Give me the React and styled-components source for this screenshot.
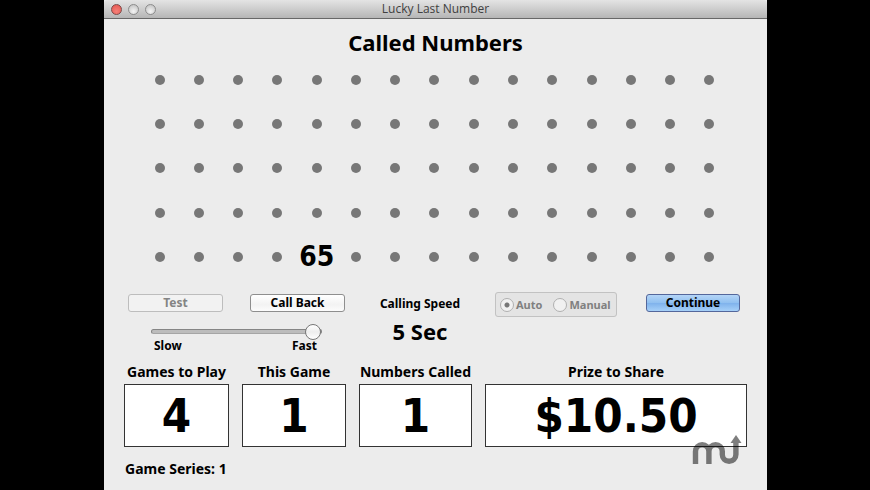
import { useState } from "react";
import styled, { createGlobalStyle } from "styled-components";

const GlobalStyle = createGlobalStyle`
  * {
    box-sizing: border-box;
  }

  body {
    margin: 0;
    background: #000;
    color: #000;
    font-family: "Noto Sans", "Open Sans", sans-serif;
  }
`;

const Desktop = styled.div`
  min-height: 100vh;
  display: flex;
  padding: 0 103px 0 104px;
`;

const Window = styled.div`
  position: relative;
  flex: 1;
  min-width: 0;
  background: #ececec;
`;

const TitleBar = styled.header`
  display: grid;
  grid-template-columns: 1fr auto 1fr;
  align-items: center;
  height: 19px;
  padding: 0 7px;
  background: linear-gradient(#e4e4e4, #b6b6b6);
  border-bottom: 1px solid #686868;
  border-top-left-radius: 4px;
  border-top-right-radius: 4px;
`;

const Lights = styled.div`
  display: flex;
  gap: 6px;
`;

const Light = styled.button`
  width: 11px;
  height: 11px;
  padding: 0;
  border: 1px solid ${({ $close }) => ($close ? "#7c4a48" : "#8c8c8c")};
  border-radius: 50%;
  background: ${({ $close }) =>
    $close
      ? "radial-gradient(circle at 50% 70%, #f58078, #e5544e)"
      : "radial-gradient(circle at 50% 70%, #f4f4f4, #bcbcbc)"};
`;

const Title = styled.div`
  font-family: "Open Sans", sans-serif;
  font-size: 12px;
  line-height: 18px;
  color: #404040;
`;

const Heading = styled.h1`
  margin: 0;
  padding: 9px 0 2px;
  font-size: 22px;
  line-height: 28px;
  font-weight: 700;
  text-align: center;
`;

const Board = styled.div`
  display: grid;
  grid-template-columns: repeat(15, minmax(0, 1fr));
  grid-template-rows: repeat(5, 1fr);
  place-items: center;
  height: 221px;
  padding: 0 38px 0 36px;
`;

const Dot = styled.span`
  width: 10px;
  height: 10px;
  border-radius: 50%;
  background: #777;
`;

const Called = styled.span`
  font-family: "DejaVu Sans Condensed", "DejaVu Sans", sans-serif;
  font-size: 28px;
  line-height: 28px;
  font-weight: 700;
`;

const Controls = styled.div`
  display: grid;
  grid-template-columns: 217px 1fr 122px 94px;
  column-gap: 29px;
  align-items: start;
  padding: 13px 27px 0 24px;
`;

const ButtonRow = styled.div`
  display: flex;
  justify-content: space-between;
  padding-top: 2px;
`;

const Button = styled.button`
  width: 95px;
  height: 18px;
  padding: 0;
  border: 1px solid ${({ $primary }) => ($primary ? "#54679b" : "#8e8e8e")};
  border-radius: 3px;
  background: ${({ $primary }) =>
    $primary
      ? "linear-gradient(#b4d5f7, #8fbff0 50%, #7fb2ec 51%, #a6d0f8)"
      : "linear-gradient(#fff, #f3f3f3 60%, #fcfcfc)"};
  color: #000;
  font-family: inherit;
  font-size: 12px;
  line-height: 16px;
  font-weight: 700;

  &:disabled {
    border-color: #bdbdbd;
    background: #f2f2f2;
    color: #848484;
  }
`;

const Slider = styled.input`
  appearance: none;
  display: block;
  width: 171px;
  height: 16px;
  margin: 11px 0 0 23px;
  background: transparent;

  &::-webkit-slider-runnable-track {
    height: 5px;
    border: 1px solid #858585;
    border-bottom-color: #a5a5a5;
    border-radius: 3px;
    background: #bcbcbc;
  }

  &::-webkit-slider-thumb {
    appearance: none;
    width: 16px;
    height: 16px;
    margin-top: -6px;
    border: 1px solid #777;
    border-radius: 50%;
    background: linear-gradient(#fff, #eee 50%, #fff);
  }
`;

const SliderLabels = styled.div`
  display: flex;
  justify-content: space-between;
  width: 163px;
  margin-left: 26px;
  font-size: 12px;
  line-height: 14px;
  font-weight: 700;
`;

const Speed = styled.div`
  text-align: center;
  font-weight: 700;
  white-space: nowrap;
`;

const SpeedLabel = styled.div`
  padding-top: 4px;
  font-size: 12px;
  line-height: 16px;
`;

const SpeedValue = styled.output`
  display: block;
  padding-top: 5px;
  font-size: 22px;
  line-height: 28px;
`;

const Modes = styled.fieldset`
  display: flex;
  align-items: center;
  gap: 11px;
  height: 25px;
  margin: 0;
  padding: 0 4px;
  border: 1px solid #c2c2c2;
  border-radius: 3px;
  background: #e4e4e4;
`;

const Mode = styled.label`
  display: flex;
  align-items: center;
  gap: 2px;
  font-size: 11px;
  line-height: 16px;
  font-weight: 700;
  color: #808080;
`;

const Radio = styled.input`
  appearance: none;
  width: 14px;
  height: 14px;
  margin: 0;
  border: 1px solid #b0b0b0;
  border-radius: 50%;
  background: #f1f1f1;

  &:checked {
    background: radial-gradient(circle, #777 2px, #f1f1f1 3px);
  }
`;

const Stats = styled.div`
  display: grid;
  grid-template-columns: 105px 104px 113px 1fr;
  column-gap: 13px;
  padding: 9px 20px 0;
`;

const StatLabel = styled.div`
  height: 22px;
  font-size: 14px;
  line-height: 20px;
  font-weight: 700;
  text-align: center;
  white-space: nowrap;
`;

const StatBox = styled.div`
  height: 63px;
  border: 1px solid #333;
  background: #fff;
  font-family: "DejaVu Sans Condensed", "DejaVu Sans", sans-serif;
  font-size: 47px;
  line-height: 61px;
  font-weight: 700;
  text-align: center;
`;

const Series = styled.div`
  padding: 12px 21px 0;
  font-size: 14px;
  line-height: 20px;
  font-weight: 700;
`;

const Watermark = styled.svg`
  position: absolute;
  right: 25px;
  bottom: 25px;
  width: 50px;
  height: 31px;
  opacity: 0.5;
`;

const COLUMNS = 15;
const ROWS = 5;
const CALLED = [65];

const stats = [
  { label: "Games to Play", value: "4" },
  { label: "This Game", value: "1" },
  { label: "Numbers Called", value: "1" },
  { label: "Prize to Share", value: "$10.50" },
];

const App = () => {
  const [speed, setSpeed] = useState(10);
  const numbers = Array.from({ length: COLUMNS * ROWS }, (_, i) => i + 1);

  return (
    <>
      <GlobalStyle />
      <Desktop>
        <Window>
          <TitleBar>
            <Lights>
              <Light $close aria-label="Close" />
              <Light aria-label="Minimize" />
              <Light aria-label="Zoom" />
            </Lights>
            <Title>Lucky Last Number</Title>
          </TitleBar>

          <Heading>Called Numbers</Heading>
          <Board>
            {numbers.map((n) =>
              CALLED.includes(n) ? <Called key={n}>{n}</Called> : <Dot key={n} />
            )}
          </Board>

          <Controls>
            <div>
              <ButtonRow>
                <Button disabled>Test</Button>
                <Button>Call Back</Button>
              </ButtonRow>
              <Slider
                type="range"
                aria-label="Calling Speed"
                min="0"
                max="10"
                value={speed}
                onChange={(e) => setSpeed(e.target.value)}
              />
              <SliderLabels>
                <span>Slow</span>
                <span>Fast</span>
              </SliderLabels>
            </div>
            <Speed>
              <SpeedLabel>Calling Speed</SpeedLabel>
              <SpeedValue>5 Sec</SpeedValue>
            </Speed>
            <Modes disabled>
              <Mode>
                <Radio type="radio" name="mode" defaultChecked />
                Auto
              </Mode>
              <Mode>
                <Radio type="radio" name="mode" />
                Manual
              </Mode>
            </Modes>
            <ButtonRow>
              <Button $primary>Continue</Button>
            </ButtonRow>
          </Controls>

          <Stats>
            {stats.map(({ label, value }) => (
              <div key={label}>
                <StatLabel>{label}</StatLabel>
                <StatBox>{value}</StatBox>
              </div>
            ))}
          </Stats>
          <Series>Game Series: 1</Series>

          <Watermark viewBox="0 0 50 31" aria-hidden="true">
            <path
              d="M3.500 30V17.400a6.700 6.700 0 0 1 13.400 0V30V17.400a6.700 6.700 0 0 1 13.400 0V20.500a6.800 6.800 0 0 0 13.600 0V8"
              fill="none"
              stroke="#000"
              strokeWidth="5.400"
            />
            <path d="M44 1l5.500 8h-11z" />
          </Watermark>
        </Window>
      </Desktop>
    </>
  );
};

export default App;
